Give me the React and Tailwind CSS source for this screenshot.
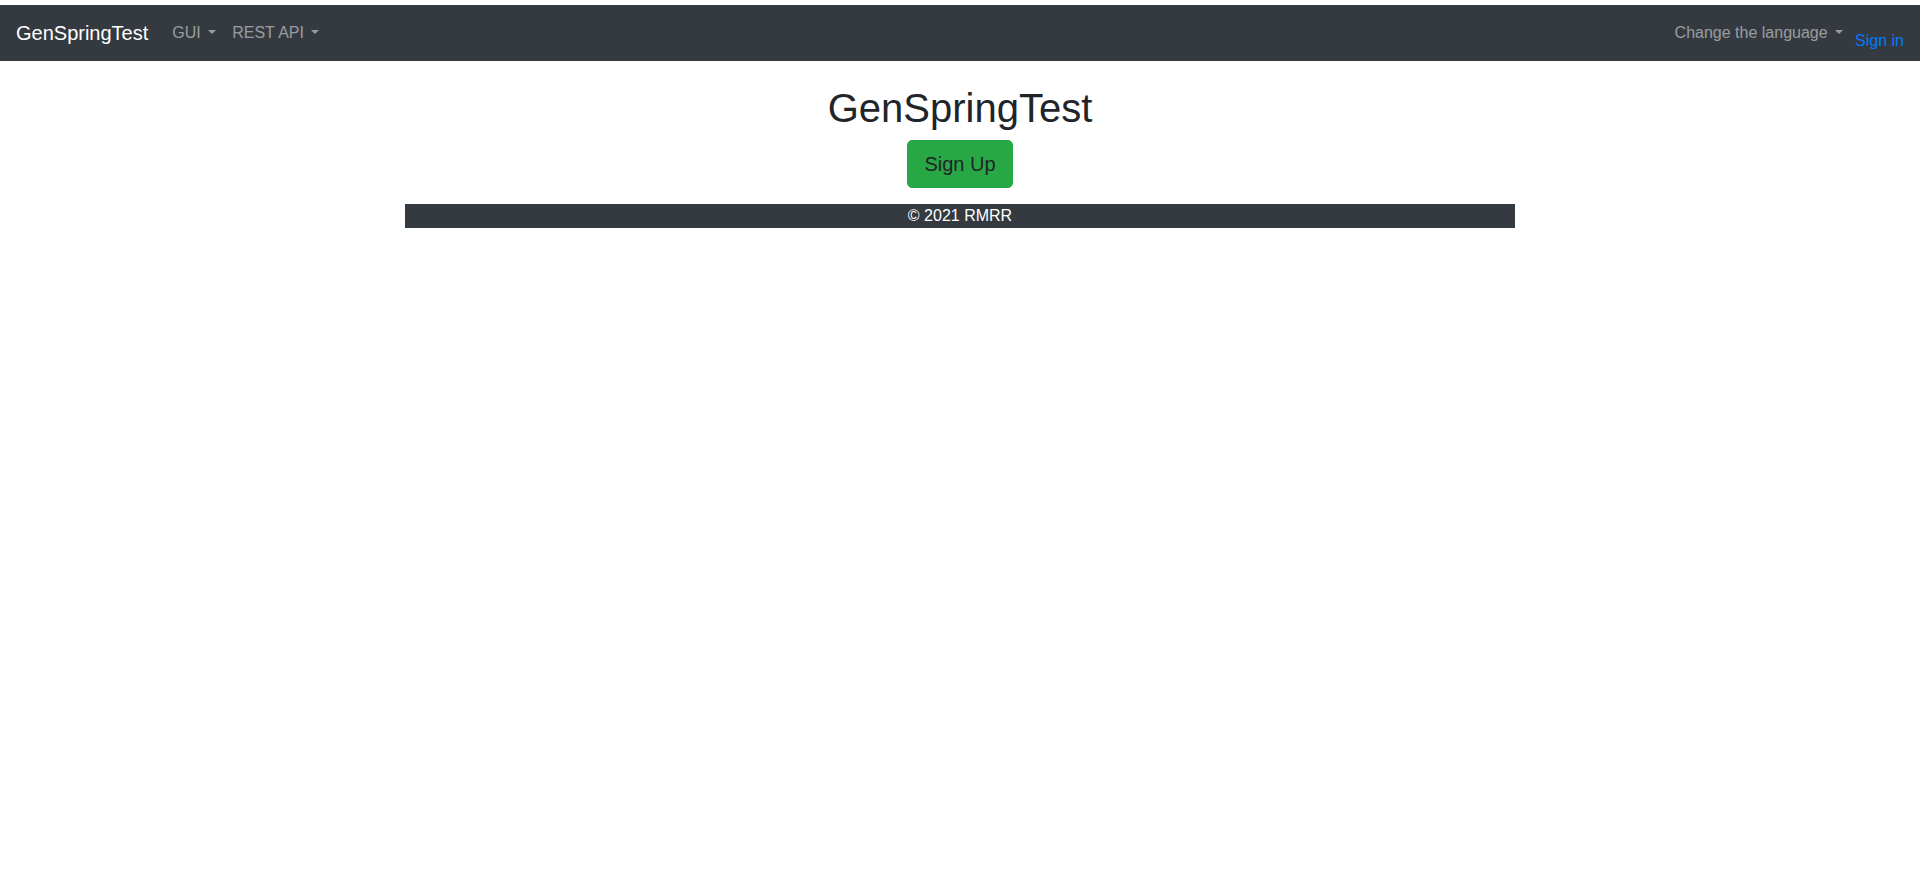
import React from 'react';

function Caret() {
  return (
    <span className="ml-[3px] inline-block align-[4px] w-0 h-0 border-t-[4.8px] border-t-current border-x-[4.8px] border-x-transparent" />
  );
}

export default function App() {
  return (
    <div className="min-h-screen bg-white pt-[5px] font-['Liberation_Sans',Arial,sans-serif] text-[16px] leading-[1.5] text-[#212529]">
      {/* NAVBAR */}
      <nav className="flex items-center h-[56px] px-4 bg-[#343a40]">
        <a className="mr-4 text-[20px] leading-[30px] text-white">GenSpringTest</a>
        <ul className="flex">
          <li className="px-2 py-2 text-white/50 whitespace-pre">GUI <Caret /></li>
          <li className="px-2 py-2 text-white/50 whitespace-pre">REST API <Caret /></li>
        </ul>
        <div className="ml-auto flex items-end">
          <div className="px-2 py-2 text-white/50 whitespace-pre">Change the language <Caret /></div>
          <a className="ml-[4px] text-[#007bff]">Sign in</a>
        </div>
      </nav>

      {/* CONTENT */}
      <div className="mx-auto w-[1140px] px-[15px] pt-[23px] text-center">
        <h1 className="mb-2 text-[40px] leading-[48px] font-normal">GenSpringTest</h1>
        <button className="px-4 py-2 text-[20px] leading-[30px] bg-[#28a745] border border-[#28a745] rounded-[5px] text-[#212529]">
          Sign Up
        </button>

        {/* FOOTER */}
        <div className="mt-4 bg-[#343a40] text-white">© 2021 RMRR</div>
      </div>
    </div>
  );
}
